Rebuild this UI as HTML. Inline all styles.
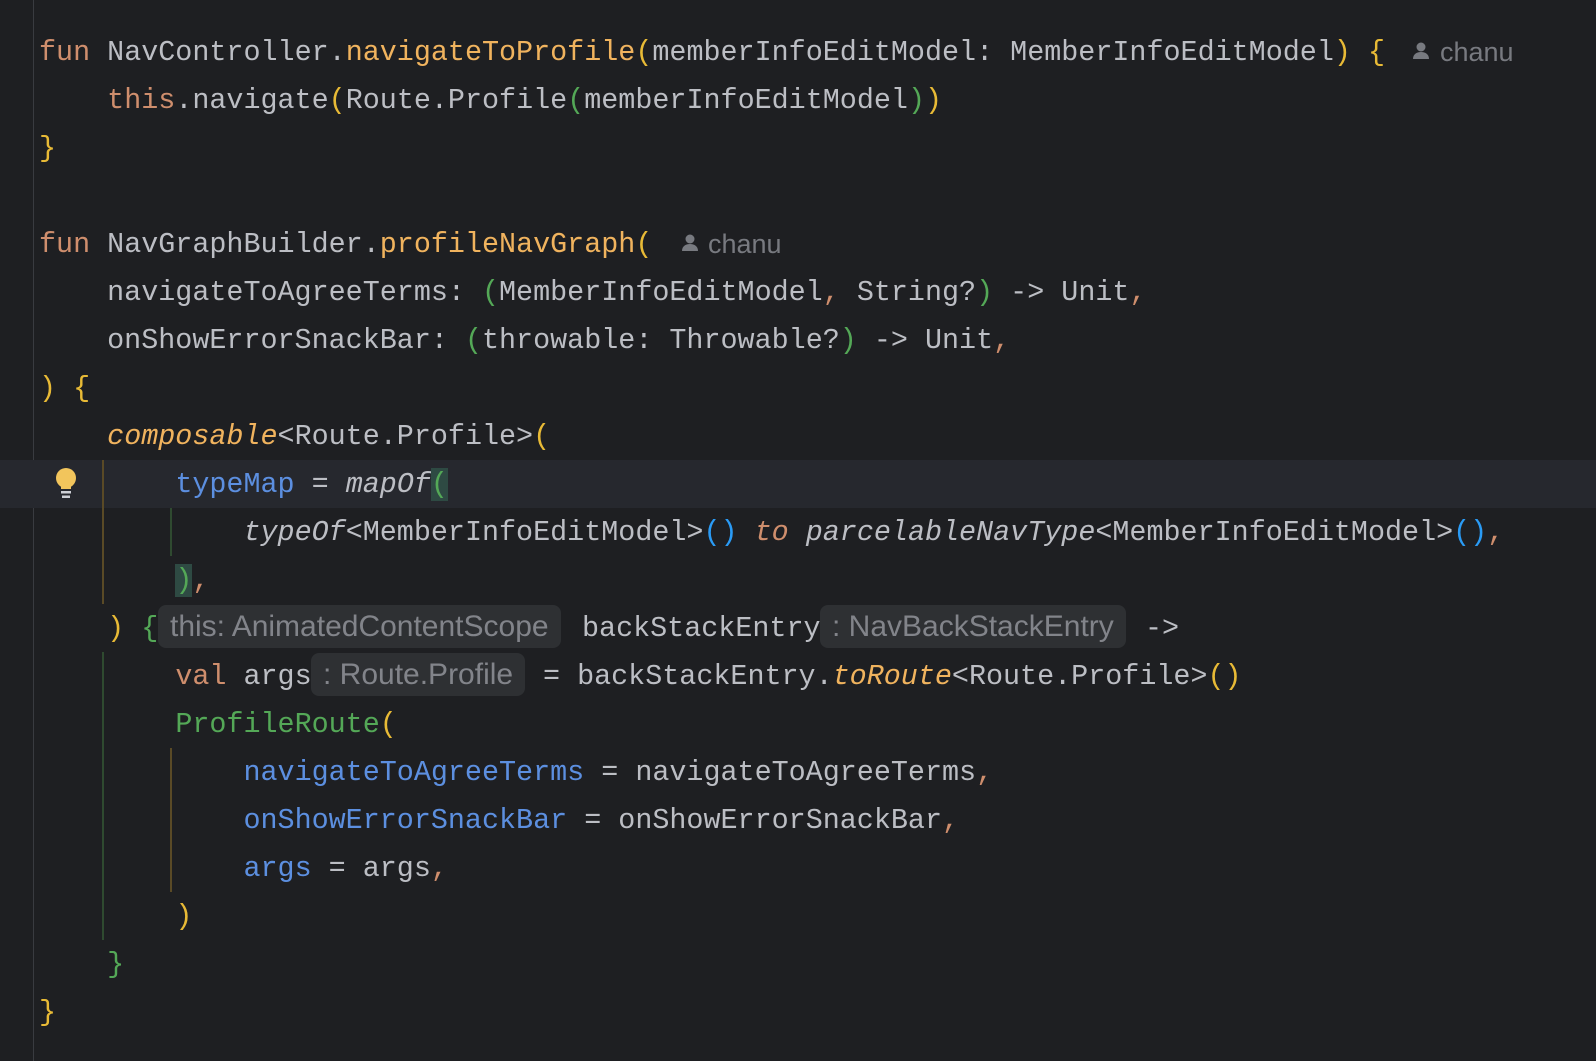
<!DOCTYPE html>
<html><head><meta charset="utf-8"><style>
body{margin:0;width:1596px;height:1061px;background:#1e1f22;overflow:hidden;position:relative;font-family:"Liberation Mono",monospace;font-size:28.4px;color:#bcbec4}
.l{position:absolute;left:39px;height:48px;line-height:48px;white-space:pre}
.a{position:absolute;height:48px;line-height:48px;white-space:pre}
.k{color:#cf8e6d}.f{color:#f0b35e}.y{color:#e8ba36}.g{color:#54a857}.b{color:#2a9bf5}.n{color:#5c8fe0}.i{font-style:italic}.c{color:#cf8e6d}
.h{position:absolute;height:43px;line-height:43px;background:#2e3033;border-radius:8px;color:#82848a;font-family:"Liberation Sans",sans-serif;font-size:30px;padding:0 12px;white-space:pre}
.u{position:absolute;font-family:"Liberation Sans",sans-serif;font-size:27px;color:#787a80;height:48px;line-height:48px}
.gv{position:absolute;width:2px}
.hl{position:absolute;left:0;width:1596px;background:#26282e}
.br{background:#2e4a43}
</style></head><body>
<div style="position:absolute;left:33px;top:0;width:1px;height:1061px;background:#393b40"></div>
<div class="hl" style="top:460px;height:48px"></div>
<div class="gv" style="left:102px;top:460px;height:144px;background:#5a4a26"></div>
<div class="gv" style="left:170px;top:508px;height:48px;background:#2f4a30"></div>
<div class="gv" style="left:102px;top:652px;height:288px;background:#2f4a30"></div>
<div class="gv" style="left:170px;top:748px;height:144px;background:#5a4a26"></div>
<svg style="position:absolute;left:54px;top:467px" width="24" height="34" viewBox="0 0 24 34"><circle cx="12" cy="11" r="10" fill="#f2c55c"/><rect x="7" y="14" width="10" height="8" fill="#f2c55c"/><rect x="7" y="24" width="10" height="2.5" fill="#ced0d6"/><rect x="8" y="28.5" width="8" height="2.5" fill="#ced0d6"/></svg>

<div class="l" style="top:29px"><span class="k">fun</span> NavController.<span class="f">navigateToProfile</span><span class="y">(</span>memberInfoEditModel: MemberInfoEditModel<span class="y">)</span> <span class="y">{</span></div>
<svg style="position:absolute;left:1411px;top:41px" width="20" height="20" viewBox="0 0 20 20"><circle cx="10" cy="6" r="4.5" fill="#787a80"/><path d="M2 18c0-5 4-7 8-7s8 2 8 7z" fill="#787a80"/></svg>
<div class="u" style="left:1440px;top:28px">chanu</div>
<div class="l" style="top:77px">    <span class="k">this</span>.navigate<span class="y">(</span>Route.Profile<span class="g">(</span>memberInfoEditModel<span class="g">)</span><span class="y">)</span></div>
<div class="l" style="top:125px"><span class="y">}</span></div>
<div class="l" style="top:221px"><span class="k">fun</span> NavGraphBuilder.<span class="f">profileNavGraph</span><span class="y">(</span></div>
<svg style="position:absolute;left:680px;top:233px" width="20" height="20" viewBox="0 0 20 20"><circle cx="10" cy="6" r="4.5" fill="#787a80"/><path d="M2 18c0-5 4-7 8-7s8 2 8 7z" fill="#787a80"/></svg>
<div class="u" style="left:708px;top:220px">chanu</div>
<div class="l" style="top:269px">    navigateToAgreeTerms: <span class="g">(</span>MemberInfoEditModel<span class="c">,</span> String?<span class="g">)</span> -&gt; Unit<span class="c">,</span></div>
<div class="l" style="top:317px">    onShowErrorSnackBar: <span class="g">(</span>throwable: Throwable?<span class="g">)</span> -&gt; Unit<span class="c">,</span></div>
<div class="l" style="top:365px"><span class="y">)</span> <span class="y">{</span></div>
<div class="l" style="top:413px">    <span class="f i">composable</span>&lt;Route.Profile&gt;<span class="y">(</span></div>
<div class="l" style="top:461px">        <span class="n">typeMap</span> = <span class="i">mapOf</span><span class="g br">(</span></div>
<div class="l" style="top:509px">            <span class="i">typeOf</span>&lt;MemberInfoEditModel&gt;<span class="b">()</span> <span class="k i">to</span> <span class="i">parcelableNavType</span>&lt;MemberInfoEditModel&gt;<span class="b">()</span><span class="c">,</span></div>
<div class="l" style="top:557px">        <span class="g br">)</span><span class="c">,</span></div>
<div class="l" style="top:605px">    <span class="y">)</span> <span class="g">{</span></div>
<div class="h" style="left:158px;top:605px">this: AnimatedContentScope</div>
<div class="a" style="left:582px;top:605px">backStackEntry</div>
<div class="h" style="left:820px;top:605px">: NavBackStackEntry</div>
<div class="a" style="left:1145px;top:605px">-&gt;</div>
<div class="l" style="top:653px">        <span class="k">val</span> args</div>
<div class="h" style="left:311px;top:653px">: Route.Profile</div>
<div class="a" style="left:543px;top:653px">= backStackEntry.<span class="f i">toRoute</span>&lt;Route.Profile&gt;<span class="y">()</span></div>
<div class="l" style="top:701px">        <span class="g">ProfileRoute</span><span class="y">(</span></div>
<div class="l" style="top:749px">            <span class="n">navigateToAgreeTerms</span> = navigateToAgreeTerms<span class="c">,</span></div>
<div class="l" style="top:797px">            <span class="n">onShowErrorSnackBar</span> = onShowErrorSnackBar<span class="c">,</span></div>
<div class="l" style="top:845px">            <span class="n">args</span> = args<span class="c">,</span></div>
<div class="l" style="top:893px">        <span class="y">)</span></div>
<div class="l" style="top:941px">    <span class="g">}</span></div>
<div class="l" style="top:989px"><span class="y">}</span></div>
</body></html>
